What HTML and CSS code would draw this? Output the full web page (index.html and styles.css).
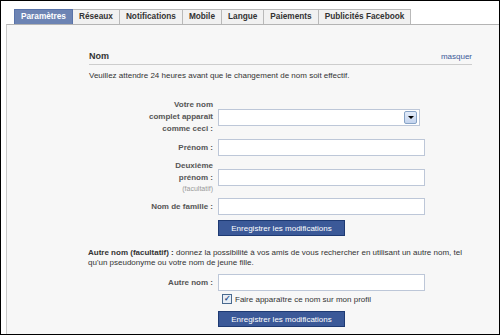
FILE: index.html
```html
<!DOCTYPE html>
<html lang="fr">
  <head>
    <meta charset="UTF-8" />
    <title>Paramètres du compte</title>
    <link rel="stylesheet" href="styles.css">
  </head>
  <body>
    <div class="frame">
      <div class="tabs">
        <span class="tab active">Paramètres</span>
        <span class="tab">Réseaux</span>
        <span class="tab">Notifications</span>
        <span class="tab">Mobile</span>
        <span class="tab">Langue</span>
        <span class="tab">Paiements</span>
        <span class="tab">Publicités Facebook</span>
      </div>

      <div class="panel">
        <div class="section">
          <div class="section-head">
            <h2>Nom</h2>
            <a href="#" class="hide-link">masquer</a>
          </div>
          <p class="notice">Veuillez attendre 24 heures avant que le changement de nom soit effectif.</p>

          <div class="form">
            <label class="label">Votre nom complet apparaît comme ceci :</label>
            <div class="select">
              <span class="select-btn"><span class="arrow"></span></span>
            </div>

            <label class="label">Prénom :</label>
            <input type="text" class="field" />

            <label class="label">Deuxième prénom :<span class="optional">(facultatif)</span></label>
            <input type="text" class="field" />

            <label class="label">Nom de famille :</label>
            <input type="text" class="field" />

            <span></span>
            <div class="actions"><button class="btn">Enregistrer les modifications</button></div>
          </div>

          <p class="alt-text"><b>Autre nom (facultatif) :</b> donnez la possibilité à vos amis de vous rechercher en utilisant un autre nom, tel qu'un pseudonyme ou votre nom de jeune fille.</p>

          <div class="form form-alt">
            <label class="label">Autre nom :</label>
            <input type="text" class="field" />

            <span></span>
            <label class="check"><span class="box">&#10003;</span>Faire apparaître ce nom sur mon profil</label>

            <span></span>
            <div class="actions"><button class="btn">Enregistrer les modifications</button></div>
          </div>
        </div>
      </div>
    </div>
  </body>
</html>
```

FILE: styles.css
```css
* {
  box-sizing: border-box;
}

body {
  margin: 0;
  font-family: "Liberation Sans", Arial, sans-serif;
  font-size: 8px;
  color: #333;
}

.frame {
  width: 500px;
  height: 335px;
  border: 1px solid #000;
  background-color: #fff;
  display: flex;
  flex-direction: column;
  overflow: hidden;
}

/* Tabs */
.tabs {
  display: flex;
  padding: 8px 0 0 13px;
}

.tab {
  height: 15px;
  line-height: 14px;
  padding: 0 6px;
  border: 1px solid #b9b9b9;
  border-bottom: none;
  border-left: none;
  background-color: #f1f1f1;
  font-size: 8.25px;
  font-weight: bold;
  color: #333;
}

.tab:first-child {
  border-left: 1px solid #b9b9b9;
}

.tab.active {
  background-color: #6d84b4;
  border-color: #5973a9;
  color: #fff;
}

.panel {
  flex: 1;
  margin-left: 5px;
  border-top: 1px solid #b4b4b4;
  border-left: 1px solid #c9c9c9;
  background-color: #f7f7f7;
}

.section {
  width: 383px;
  margin: 26px 0 0 82px;
}

.section-head {
  display: flex;
  justify-content: space-between;
  align-items: flex-end;
  padding-bottom: 3px;
  border-bottom: 1px solid #cdcdcd;
}

.section-head h2 {
  margin: 0;
  font-size: 9px;
  font-weight: bold;
  color: #333;
}

.hide-link {
  color: #3b5998;
  text-decoration: none;
}

.notice {
  margin: 6px 0 0;
}

/* Form grid */
.form {
  display: grid;
  grid-template-columns: 124px 207px;
  column-gap: 5px;
  row-gap: 4px;
  align-items: center;
  margin-top: 19px;
}

.label {
  text-align: right;
  font-weight: bold;
  color: #555;
  line-height: 12px;
  padding-left: 60px;
}

.optional {
  display: block;
  font-weight: normal;
  color: #999;
  font-size: 7px;
  line-height: 10px;
}

.field {
  width: 207px;
  height: 17px;
  border: 1px solid #bdc7d8;
  background-color: #fff;
  margin: 0;
}

.select {
  width: 202px;
  height: 17px;
  border: 1px solid #bdc7d8;
  background-color: #fff;
  display: flex;
  justify-content: flex-end;
  align-items: center;
  padding-right: 2px;
}

.select-btn {
  width: 13px;
  height: 13px;
  border: 1px solid #87a3c6;
  border-radius: 2px;
  background: linear-gradient(#e3ecf9, #c4d4ee);
  display: flex;
  justify-content: center;
  align-items: center;
}

.arrow {
  width: 0;
  height: 0;
  border-left: 3px solid transparent;
  border-right: 3px solid transparent;
  border-top: 3px solid #000;
}

.actions {
  margin-top: 1px;
}

.btn {
  width: 127px;
  height: 16px;
  padding: 0;
  border: 1px solid #1e3a73;
  background-color: #3b5998;
  color: #fff;
  font-family: "Liberation Sans", Arial, sans-serif;
  font-size: 8px;
}

.alt-text {
  margin: 12px 0 0 -1px;
  line-height: 10px;
  width: 390px;
}

.form-alt {
  margin-top: 6px;
  row-gap: 0;
}

.form-alt .actions {
  margin-top: 7px;
}

.check {
  display: flex;
  align-items: center;
  margin-top: 3px;
  padding-left: 4px;
  gap: 3px;
}

.box {
  width: 10px;
  height: 10px;
  border: 1px solid #4a6a8f;
  background-color: #e8eef6;
  color: #2b4f86;
  font-size: 8px;
  line-height: 8px;
  text-align: center;
  font-weight: bold;
}
```
